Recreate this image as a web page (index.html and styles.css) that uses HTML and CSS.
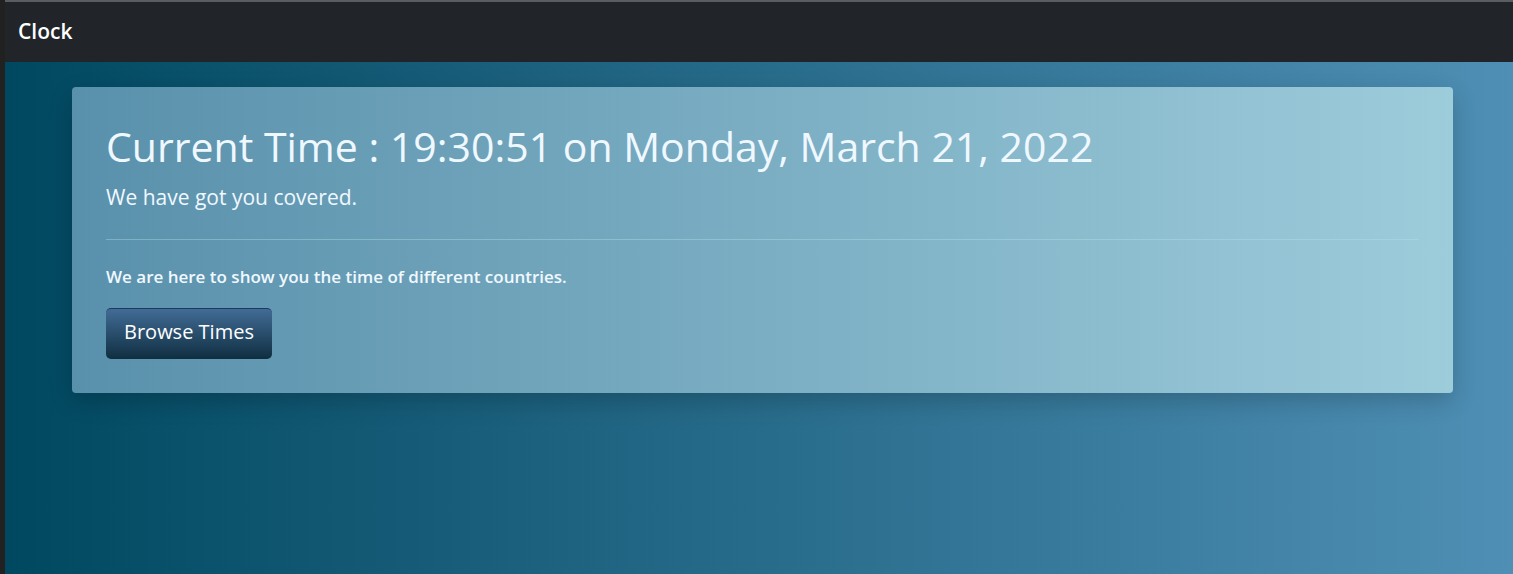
FILE: index.html
```html
<!DOCTYPE html>
<html lang="en">
<head>
<meta charset="utf-8">
<meta name="viewport" content="width=device-width, initial-scale=1">
<title>Clock</title>
<link rel="stylesheet" href="styles.css">
</head>
<body>
<header class="navbar"><a class="brand" href="#">Clock</a></header>
<main class="content">
<section class="hero">
<h1 class="hero-title">Current Time : 19:30:51 on Monday, March 21, 2022</h1>
<p class="hero-lead">We have got you covered.</p>
<hr class="hero-rule">
<p class="hero-note">We are here to show you the time of different countries.</p>
<button class="browse" type="button">Browse Times</button>
</section>
</main>
</body>
</html>
```

FILE: styles.css
```css
* { box-sizing: border-box; }
html { min-height: 100%; background: #212529; }
body {
  margin: 0;
  min-height: 100vh;
  border-left: 5px solid #212121;
  background: linear-gradient(to right, #004860, #4f8fb5);
  font-family: "Trebuchet MS", "Open Sans", sans-serif;
  color: #f0f8ff;
}
.navbar {
  display: flex;
  align-items: center;
  padding: 15px 13px 17px;
  border-top: 2px solid #5a5d60;
  background: #212529;
}
.brand { color: #fff; font-size: 21px; line-height: 28px; font-weight: 600; text-decoration: none; }
.content { padding: 25px 60px 24px 67px; }
.hero {
  padding: 34px;
  border-radius: 4px;
  background: linear-gradient(to right, #5990ab, #9dccdb);
  box-shadow: 0 8px 24px rgba(0, 0, 0, 0.2);
}
.hero-title { margin: 0 0 10px; font-size: 41px; line-height: 50px; font-weight: 400; }
.hero-lead { margin: 0; font-size: 21px; line-height: 32px; }
.hero-rule { margin: 26px 0; border: 0; border-top: 1px solid rgba(178, 224, 236, 0.4); }
.hero-note { margin: 0 0 20px; font-size: 17px; line-height: 22px; font-weight: 600; }
.browse {
  display: block;
  padding: 9px 18px 13px;
  border: 0;
  border-top: 1px solid #1c3a5e;
  border-radius: 5px;
  background: linear-gradient(#426c96, #0f2e40);
  color: #fff;
  font: 20px/28px "Trebuchet MS", "Open Sans", sans-serif;
}
```
